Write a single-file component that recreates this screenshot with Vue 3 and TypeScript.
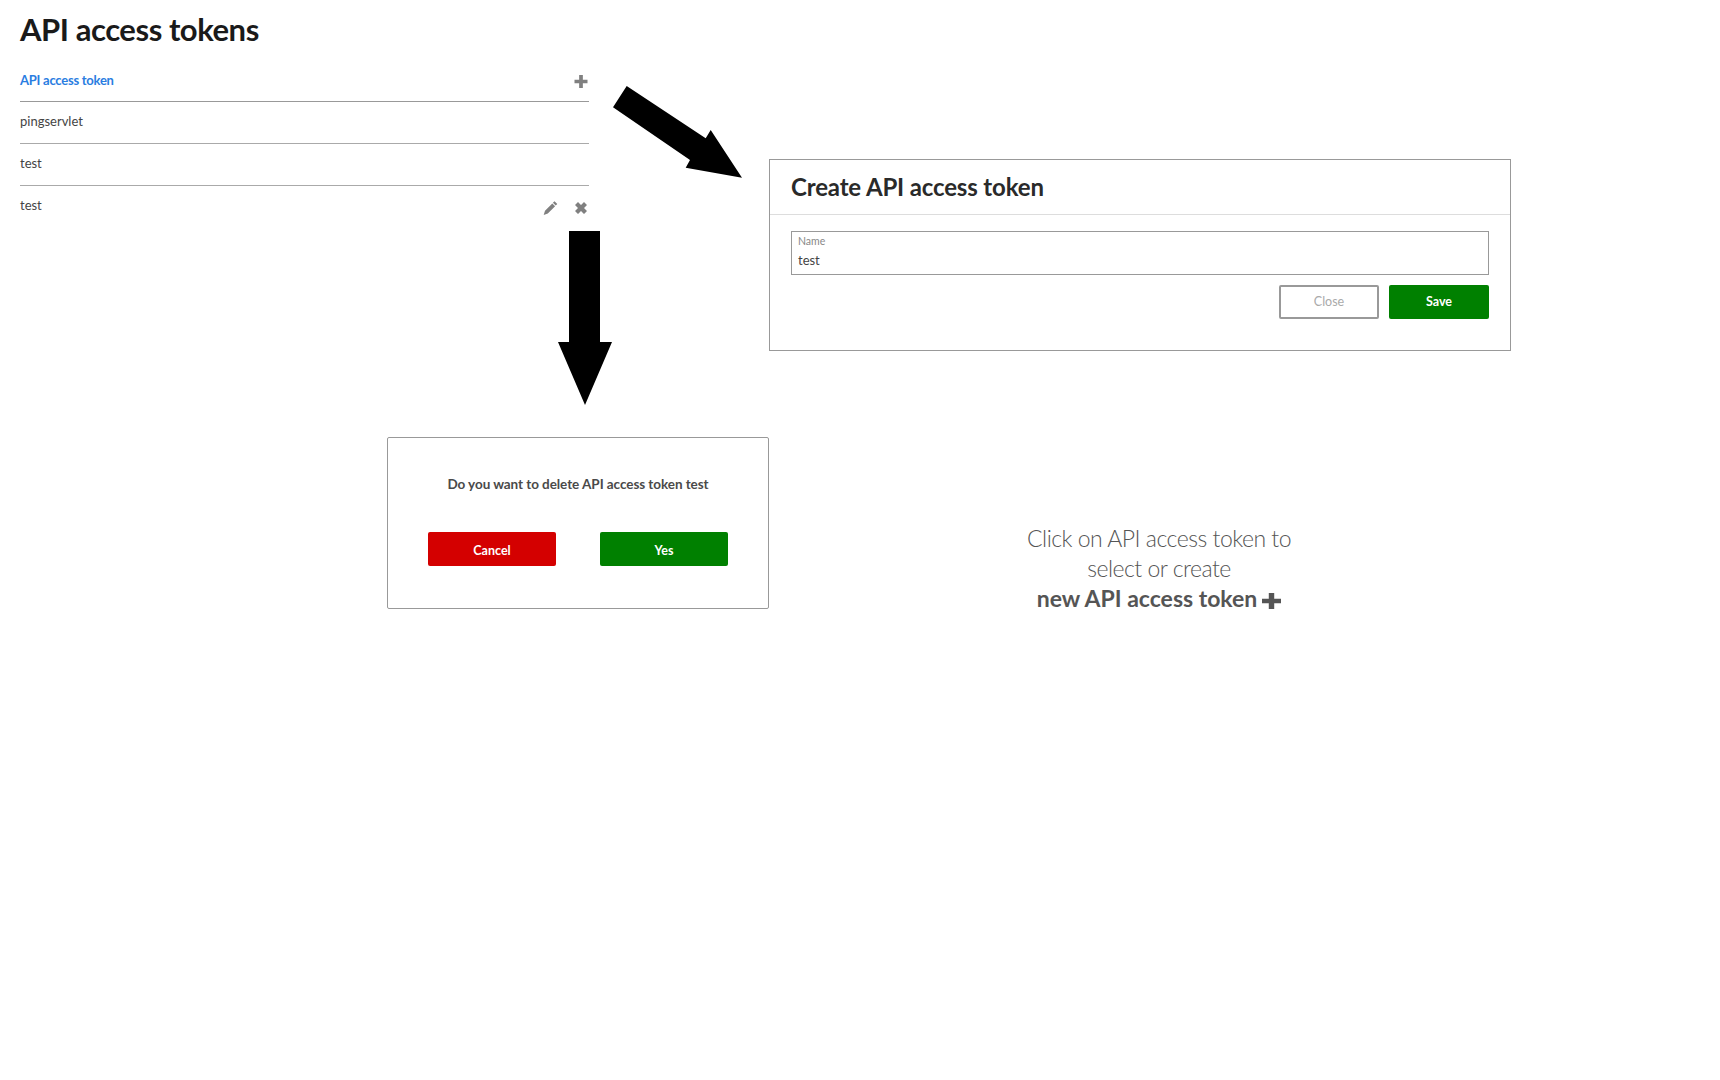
<script setup lang="ts">
const tokens: string[] = ['pingservlet', 'test']
</script>

<template>
  <div class="page">
    <section class="tokens">
      <h1 class="title">API access tokens</h1>
      <div class="row head">
        <span class="head-label">API access token</span>
        <svg class="icon plus" viewBox="0 0 14 14"><path d="M5 0h4v5h5v4H9v5H5V9H0V5h5z" /></svg>
      </div>
      <div v-for="(t, i) in tokens" :key="i" class="row">
        <span>{{ t }}</span>
      </div>
      <div class="row last">
        <span>test</span>
        <div class="actions">
          <svg class="icon pencil" viewBox="0 0 14 14"><path d="M11 0.200L13.800 3l-1.600 1.600-2.800-2.800zM8.800 2.400l2.800 2.800-7.300 7.300-4.100 1.400 1.300-4.200z" /></svg>
          <svg class="icon cross" viewBox="0 0 12 12"><path d="M3 0l3 3 3-3 3 3-3 3 3 3-3 3-3-3-3 3-3-3 3-3-3-3z" /></svg>
        </div>
      </div>
    </section>

    <svg class="arrow arrow-diag" viewBox="0 0 130 92"><path d="M13.700 0L0 21.300l77 52.700-4.300 7.700L129 91.700 97.700 44l-5 8.300z" /></svg>
    <svg class="arrow arrow-down" viewBox="0 0 54 174"><path d="M11 0h31v111h12L27 174 0 111h11z" /></svg>

    <div class="dialog create">
      <h2 class="dialog-title">Create API access token</h2>
      <div class="dialog-body">
        <div class="field">
          <span class="field-label">Name</span>
          <span class="field-value">test</span>
        </div>
        <div class="buttons">
          <button class="btn outline">Close</button>
          <button class="btn green">Save</button>
        </div>
      </div>
    </div>

    <div class="dialog confirm">
      <p class="question">Do you want to delete API access token test</p>
      <div class="confirm-buttons">
        <button class="btn wide red">Cancel</button>
        <button class="btn wide green">Yes</button>
      </div>
    </div>

    <div class="hint">
      <div class="hint-light">Click on API access token to</div>
      <div class="hint-light">select or create</div>
      <div class="hint-strong">
        new API access token
        <svg class="hint-plus" viewBox="0 0 14 14" preserveAspectRatio="none"><path d="M5 0h4v5h5v4H9v5H5V9H0V5h5z" /></svg>
      </div>
    </div>
  </div>
</template>

<style>
html, body { margin: 0; background: #fff; }
</style>

<style scoped>
.page {
  position: relative;
  width: 1720px;
  height: 1080px;
  overflow: hidden;
  background: #fff;
  font-family: "Lato", "Open Sans", sans-serif;
  color: #444;
}
.tokens {
  width: 569px;
  margin-left: 20px;
  display: flex;
  flex-direction: column;
}
.title {
  margin: 0;
  height: 60px;
  padding-top: 10px;
  box-sizing: border-box;
  font-size: 31px;
  line-height: 38px;
  font-weight: 700;
  color: #1a1a1a;
  letter-spacing: -0.45px;
}
.row {
  height: 42px;
  box-sizing: border-box;
  border-bottom: 1px solid #aaa;
  padding-bottom: 3px;
  display: flex;
  justify-content: space-between;
  align-items: center;
  font-size: 13px;
  color: #444;
}
.head {
  border-bottom-color: #999;
  padding-bottom: 1px;
}
.head-label {
  color: #2a7de1;
  font-weight: 700;
  font-size: 13px;
  letter-spacing: -0.25px;
}
.last {
  border-bottom: none;
  padding-bottom: 4px;
}
.actions {
  display: flex;
  align-items: center;
  gap: 17px;
  padding-right: 2px;
  margin-top: 5px;
}
.icon { display: block; fill: #808080; }
.plus { width: 14px; height: 13px; margin-right: 1px; margin-top: 2px; }
.pencil { width: 15px; height: 14px; }
.cross { width: 12px; height: 12px; }
.arrow { position: absolute; display: block; fill: #000; }
.arrow-diag { left: 613px; top: 86px; width: 130px; height: 92px; }
.arrow-down { left: 558px; top: 231px; width: 54px; height: 174px; }
.dialog {
  position: absolute;
  box-sizing: border-box;
  border: 1px solid #999;
  background: #fff;
}
.create { left: 769px; top: 159px; width: 742px; height: 192px; }
.dialog-title {
  margin: 0;
  height: 55px;
  box-sizing: border-box;
  padding: 11px 21px 0;
  border-bottom: 1px solid #ddd;
  font-size: 24px;
  line-height: 32px;
  font-weight: 700;
  color: #2a2a2a;
  letter-spacing: -0.15px;
}
.dialog-body {
  padding: 16px 21px 0;
  display: flex;
  flex-direction: column;
  gap: 10px;
}
.field {
  height: 44px;
  box-sizing: border-box;
  border: 1px solid #999;
  padding: 2px 6px;
  display: flex;
  flex-direction: column;
}
.field-label { font-size: 10.5px; line-height: 14px; color: #888; }
.field-value { font-size: 13px; line-height: 20px; margin-top: 2px; color: #444; }
.buttons { display: flex; justify-content: flex-end; gap: 10px; }
.btn {
  width: 100px;
  height: 34px;
  box-sizing: border-box;
  border: none;
  border-radius: 2px;
  padding: 0 0 1px;
  font-family: inherit;
  font-size: 12.5px;
  font-weight: 700;
  color: #fff;
}
.wide { width: 128px; padding: 2px 0 0; }
.green { background: #008000; }
.red { background: #d40000; }
.outline {
  background: #fff;
  border: 2px solid #999;
  color: #aaa;
  font-weight: 400;
}
.confirm {
  left: 387px;
  top: 437px;
  width: 382px;
  height: 172px;
  border-radius: 2px;
  padding: 36px 40px 0;
}
.question {
  margin: 0;
  text-align: center;
  font-size: 13.5px;
  line-height: 20px;
  font-weight: 700;
  color: #4a4a4a;
  letter-spacing: -0.06px;
  white-space: nowrap;
}
.confirm-buttons {
  display: flex;
  justify-content: space-between;
  margin-top: 38px;
}
.hint {
  position: absolute;
  left: 959px;
  top: 523px;
  width: 400px;
  text-align: center;
  font-size: 23px;
  line-height: 30px;
  color: #555;
}
.hint-light {
  font-weight: 300;
  letter-spacing: -0.5px;
}
.hint-strong {
  font-weight: 700;
  display: flex;
  justify-content: center;
  align-items: center;
  gap: 5px;
}
.hint-plus { width: 19px; height: 16px; fill: #555; margin-top: 5px; }
</style>
